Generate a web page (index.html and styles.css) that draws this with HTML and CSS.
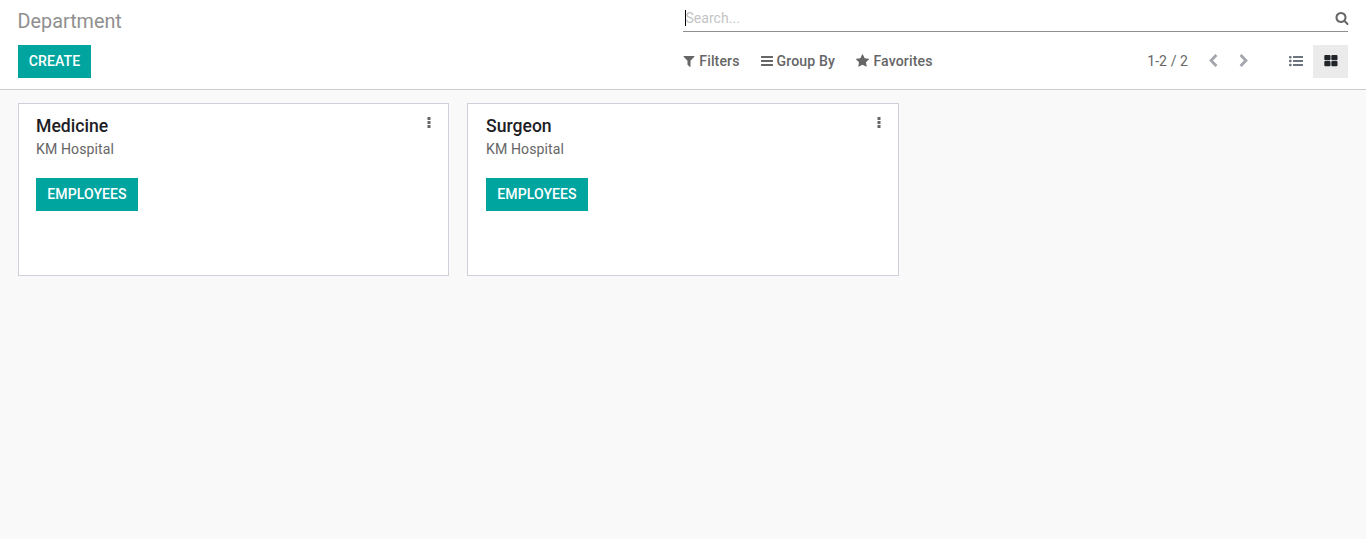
FILE: index.html
```html
<!DOCTYPE html>
<html lang="en">
<head>
<meta charset="utf-8">
<title>Department</title>
<link rel="stylesheet" href="styles.css">
</head>
<body>
<header class="control-panel">
  <div class="panel-left">
    <h1 class="title">Department</h1>
    <button class="btn create">CREATE</button>
  </div>
  <div class="panel-right">
    <div class="search">
      <span class="caret"></span><span class="placeholder">Search...</span>
      <svg class="icon search-icon" viewBox="0 0 1792 1792"><path d="M1216 832q0-185-131.500-316.500t-316.500-131.500-316.500 131.500-131.500 316.500 131.500 316.500 316.500 131.500 316.500-131.500 131.500-316.500zm512 832q0 52-38 90t-90 38q-54 0-90-38l-343-342q-179 124-399 124-143 0-273.500-55.500t-225-150-150-225-55.500-273.500 55.500-273.500 150-225 225-150 273.500-55.500 273.500 55.500 225 150 150 225 55.500 273.500q0 220-124 399l343 343q37 37 37 90z"/></svg>
    </div>
    <div class="tools">
      <div class="filters">
        <span class="filter"><svg class="icon funnel" viewBox="192 0 1408 1792"><path d="M1595 295q17 41-14 70l-493 493v742q0 42-39 59-13 5-25 5-27 0-45-19l-256-256q-19-19-19-45v-486l-493-493q-31-29-14-70 17-39 59-39h1280q42 0 59 39z"/></svg>Filters</span>
        <span class="filter"><svg class="icon bars" viewBox="0 0 12 14"><path d="M.5 2h11a.5.5 0 0 1 .5.500v1a.5.5 0 0 1-.5.500h-11a.5.5 0 0 1-.5-.5v-1a.5.5 0 0 1 .5-.5zM.5 6h11a.5.5 0 0 1 .5.500v1a.5.5 0 0 1-.5.500h-11a.5.5 0 0 1-.5-.5v-1a.5.5 0 0 1 .5-.5zM.5 10h11a.5.5 0 0 1 .5.500v1a.5.5 0 0 1-.5.500h-11a.5.5 0 0 1-.5-.5v-1a.5.5 0 0 1 .5-.5z"/></svg>Group By</span>
        <span class="filter"><svg class="icon star" viewBox="64 0 1664 1792"><path d="M1728 647q0 22-26 48l-363 354 86 500q1 7 1 20 0 21-10.500 35.500t-30.500 14.500q-19 0-40-12l-449-236-449 236q-22 12-40 12-21 0-31.500-14.500t-10.500-35.500q0-6 2-20l86-500-364-354q-25-27-25-48 0-37 56-46l502-73 225-455q19-41 49-41t49 41l225 455 502 73q56 9 56 46z"/></svg>Favorites</span>
      </div>
      <div class="paging">
        <span class="count">1-2 / 2</span>
        <svg class="icon chevron" viewBox="0 0 1792 1792"><path d="M1427 301l-531 531 531 531q19 19 19 45t-19 45l-166 166q-19 19-45 19t-45-19l-742-742q-19-19-19-45t19-45l742-742q19-19 45-19t45 19l166 166q19 19 19 45t-19 45z"/></svg>
        <svg class="icon chevron" viewBox="0 0 1792 1792"><path d="M1363 877l-742 742q-19 19-45 19t-45-19l-166-166q-19-19-19-45t19-45l531-531-531-531q-19-19-19-45t19-45l166-166q19-19 45-19t45 19l742 742q19 19 19 45t-19 45z"/></svg>
        <span class="view"><svg class="icon list" viewBox="0 0 14 14"><rect x="0" y="2" width="2.600" height="2.400" rx=".8"/><rect x="0" y="5.800" width="2.600" height="2.400" rx=".8"/><rect x="0" y="9.800" width="2.600" height="2.400" rx=".8"/><rect x="4" y="2" width="10" height="2" rx=".3"/><rect x="4" y="6" width="10" height="2" rx=".3"/><rect x="4" y="10" width="10" height="2" rx=".3"/></svg></span>
        <span class="view active"><svg class="icon tiles" viewBox="0 0 14 14"><rect x=".3" y="1" width="6.200" height="5.300" rx="1"/><rect x="7.300" y="1" width="6.200" height="5.300" rx="1"/><rect x=".3" y="7" width="6.200" height="5.200" rx="1"/><rect x="7.300" y="7" width="6.200" height="5.200" rx="1"/></svg></span>
      </div>
    </div>
  </div>
</header>
<main class="board">
  <article class="card">
    <div class="card-head"><h2 class="name">Medicine</h2><svg class="dots" viewBox="0 0 4 12"><path d="M.5 0h3v3h-3zM.5 4h3v3h-3zM.5 8h3v3h-3z"/></svg></div>
    <p class="company">KM Hospital</p>
    <button class="btn">EMPLOYEES</button>
  </article>
  <article class="card second">
    <div class="card-head"><h2 class="name">Surgeon</h2><svg class="dots" viewBox="0 0 4 12"><path d="M.5 0h3v3h-3zM.5 4h3v3h-3zM.5 8h3v3h-3z"/></svg></div>
    <p class="company">KM Hospital</p>
    <button class="btn">EMPLOYEES</button>
  </article>
</main>
</body>
</html>
```
FILE: styles.css
```css
* { box-sizing: border-box; }
body {
  margin: 0;
  min-height: 539px;
  background: #f9f9f9;
  color: #666;
  font: 14.08px/21px Roboto, "Noto Sans", sans-serif;
}
h1, h2, p { margin: 0; }
.control-panel {
  display: grid;
  grid-template-columns: 665px 665px;
  height: 90px;
  padding: 0 18px;
  background: #fff;
  border-bottom: 1px solid #ccc;
}
.title {
  height: 45px;
  margin-left: -.4px;
  padding-top: 7px;
  font-size: 19.8px;
  line-height: 30px;
  font-weight: 400;
  color: #8f8f8f;
}
.btn {
  display: block;
  width: 102px;
  height: 33px;
  padding: 0;
  border: 0;
  background: #00a5a0;
  color: #fff;
  font: 500 14.08px/33px Roboto, "Noto Sans", sans-serif;
  letter-spacing: .06px;
  text-align: center;
}
.create { width: 73px; }
.icon { display: block; fill: currentColor; width: 14px; height: 14px; flex: none; }
.search {
  display: flex;
  align-items: center;
  height: 32px;
  padding: 5px 0 0 2px;
  border-bottom: 1px solid #8f8f8f;
}
.caret { width: 1px; height: 16px; background: #000; }
.placeholder { margin-left: -.5px; color: #c4c4c4; }
.search-icon { margin-left: auto; margin-right: -1px; }
.tools {
  display: flex;
  justify-content: space-between;
  height: 33px;
  margin-top: 13px;
}
.tools .icon { margin-bottom: 1px; }
.filters { display: flex; align-items: center; gap: 21px; font-weight: 500; letter-spacing: .13px; }
.filter { display: flex; align-items: center; gap: 4px; white-space: nowrap; }
.funnel { width: 12px; margin-left: .3px; }
.bars { width: 12px; }
.star { width: 13px; margin-left: .4px; }
.paging { display: flex; align-items: center; }
.count { margin-right: 18px; letter-spacing: .05px; }
.chevron { color: #a3a5ad; margin-right: 17px; }
.chevron + .view { margin-left: 10px; }
.view {
  display: flex;
  align-items: center;
  justify-content: center;
  width: 35px;
  height: 33px;
  color: #6c757d;
}
.active { background: #ebebeb; color: #212529; }
.board {
  display: grid;
  grid-template-columns: 431px 432px;
  gap: 18px;
  padding: 13px 18px;
}
.card {
  height: 173px;
  padding: 12px 17px;
  background: #fff;
  border: 1px solid #ced0da;
}
.second { padding-left: 18px; }
.card-head { display: flex; justify-content: space-between; height: 23px; }
.name { font-size: 17.6px; line-height: 20px; font-weight: 500; color: #1d1d26; }
.dots { width: 4px; height: 12px; margin-top: 1px; fill: #666; }
.company { margin-bottom: 18px; letter-spacing: .1px; }
```
